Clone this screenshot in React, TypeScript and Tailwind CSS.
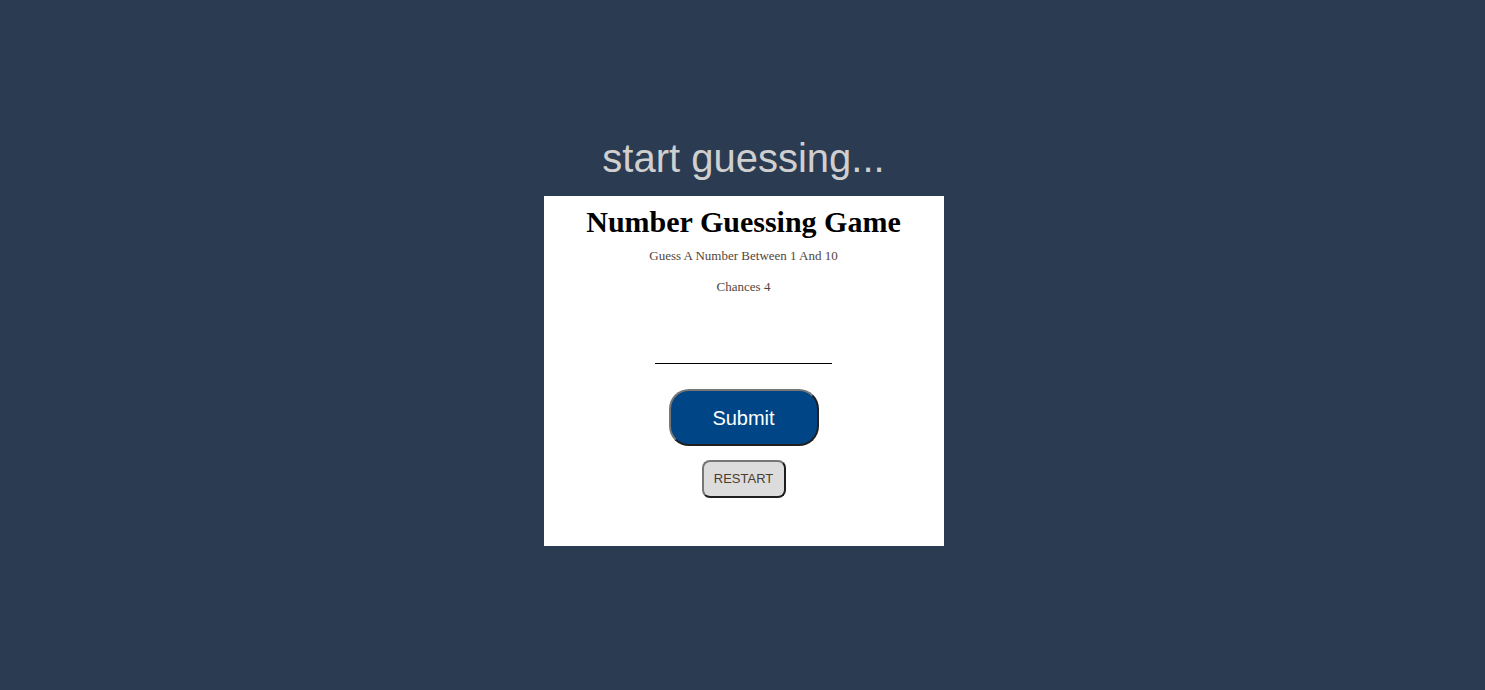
import { useState } from 'react';

export default function App() {
  const [guess, setGuess] = useState('');
  const [chances] = useState(4);

  return (
    <div className="min-h-[690px] w-full bg-[#2b3b51] flex flex-col items-center pt-[135px] pl-[2px] font-['Liberation_Sans',Arial,sans-serif]">
      <h2 className="text-[40px] leading-[46px] text-[#cfcfcf] mb-[15px]">start guessing...</h2>
      <div className="w-[400px] h-[350px] bg-white flex flex-col items-center pt-[7px]">
        <h1 className="font-['Liberation_Serif','Times_New_Roman',serif] font-bold text-[30px] leading-[37px] text-black">
          Number Guessing Game
        </h1>
        <p className="font-['Liberation_Serif','Times_New_Roman',serif] text-[13px] leading-[15px] text-[#54453a] mt-[8px]">
          Guess A Number Between 1 And 10
        </p>
        <p className="font-['Liberation_Serif','Times_New_Roman',serif] text-[13px] leading-[15px] text-[#54453a] mt-[16px]">
          Chances {chances}
        </p>
        <input
          type="text"
          value={guess}
          onChange={(e) => setGuess(e.target.value)}
          className="mt-[48px] w-[177px] h-[22px] border-0 border-b border-b-black outline-none text-center text-[13px]"
        />
        <button className="mt-[25px] w-[150px] h-[57px] rounded-[20px] bg-[#004687] text-white text-[20px] border-2 border-t-[#767676] border-l-[#767676] border-r-[#1f1f1f] border-b-[#1f1f1f]">
          Submit
        </button>
        <button className="mt-[14px] w-[84px] h-[38px] rounded-[8px] bg-[#dcdcdc] text-[#4a3b2e] text-[13px] border-2 border-t-[#767676] border-l-[#767676] border-r-[#1f1f1f] border-b-[#1f1f1f]">
          RESTART
        </button>
      </div>
    </div>
  );
}
